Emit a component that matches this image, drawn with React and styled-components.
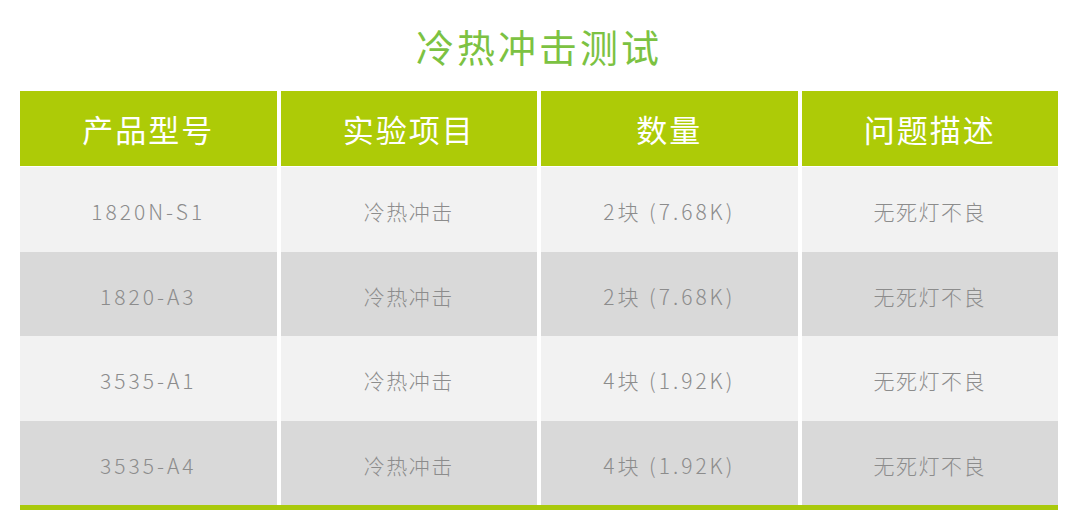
import React from 'react';
import styled, { createGlobalStyle } from 'styled-components';

const GlobalStyle = createGlobalStyle`
  html, body {
    margin: 0;
    padding: 0;
    background: #ffffff;
  }
  body {
    font-family: "Noto Sans CJK SC", "Noto Sans", sans-serif;
  }
`;

const Page = styled.div`
  width: 1080px;
  height: 527px;
  padding: 0 22px 0 20px;
  box-sizing: border-box;
  overflow: hidden;
`;

const Title = styled.h1`
  margin: 0;
  padding-top: 23px;
  height: 91px;
  box-sizing: border-box;
  text-align: center;
  font-size: 38px;
  font-weight: 400;
  line-height: 46px;
  letter-spacing: 3px;
  color: #7cc242;
`;

const Table = styled.div`
  display: grid;
  grid-template-columns: repeat(4, 1fr);
  column-gap: 4px;
  border-bottom: 5px solid #a9c90c;
`;

const HeadCell = styled.div`
  height: 75px;
  display: flex;
  align-items: center;
  justify-content: center;
  background: #adcb07;
  color: #ffffff;
  font-size: 31px;
  font-weight: 400;
  letter-spacing: 2px;
  margin-bottom: 1px;
`;

const Cell = styled.div`
  height: 84.5px;
  display: flex;
  align-items: center;
  justify-content: center;
  padding-top: 4px;
  box-sizing: border-box;
  background: ${({ $dark }) => ($dark ? '#d9d9d9' : '#f2f2f2')};
  color: #8c8c8c;
  font-size: 21px;
  font-weight: 300;
  letter-spacing: ${({ $wide }) => ($wide ? '3px' : '1.5px')};
`;

const headers = ['产品型号', '实验项目', '数量', '问题描述'];

const rows = [
  ['1820N-S1', '冷热冲击', '2块 (7.68K)', '无死灯不良'],
  ['1820-A3', '冷热冲击', '2块 (7.68K)', '无死灯不良'],
  ['3535-A1', '冷热冲击', '4块 (1.92K)', '无死灯不良'],
  ['3535-A4', '冷热冲击', '4块 (1.92K)', '无死灯不良'],
];

export default function App() {
  return (
    <Page>
      <GlobalStyle />
      <Title>冷热冲击测试</Title>
      <Table>
        {headers.map(h => (
          <HeadCell key={h}>{h}</HeadCell>
        ))}
        {rows.map((row, i) =>
          row.map((text, j) => (
            <Cell key={`${i}-${j}`} $dark={i % 2 === 1} $wide={j === 0 || j === 2}>
              {text}
            </Cell>
          ))
        )}
      </Table>
    </Page>
  );
}
